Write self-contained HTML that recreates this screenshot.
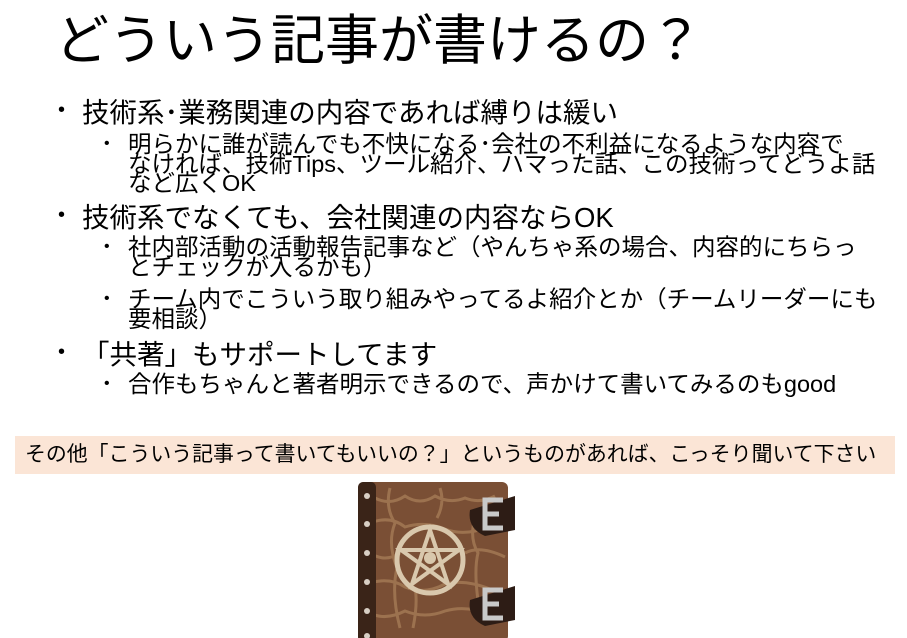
<!DOCTYPE html>
<html><head><meta charset="utf-8"><style>
body{margin:0;width:907px;height:636px;background:#fff;position:relative;overflow:hidden;font-family:"Liberation Sans","Noto Sans CJK JP",sans-serif;color:#000}
.t{position:absolute;white-space:nowrap}
.title{left:55px;top:9px;font-size:54px;line-height:64px}
.l1{font-size:27.5px;line-height:30px;left:82px}
.l2{font-size:23.5px;line-height:19.5px;left:128px}
.b1,.b2{position:absolute;font-size:20px}
.b1{left:58px}.b2{left:104px;font-size:16px}
.banner{position:absolute;left:15px;top:436px;width:880px;height:38px;background:#fbe5d6}
.banner span{position:absolute;left:10px;top:6px;font-size:20.9px;line-height:26px;white-space:nowrap}
</style></head><body>
<div class="t title">どういう記事が書けるの？</div>

<div class="b1" style="top:99px">•</div>
<div class="t l1" style="top:98px">技術系･業務関連の内容であれば縛りは緩い</div>
<div class="b2" style="top:135px">•</div>
<div class="t l2" style="top:135px">明らかに誰が読んでも不快になる･会社の不利益になるような内容で<br>なければ、技術Tips、ツール紹介、ハマった話、この技術ってどうよ話<br>など広くOK</div>

<div class="b1" style="top:204px">•</div>
<div class="t l1" style="top:203px">技術系でなくても、会社関連の内容ならOK</div>
<div class="b2" style="top:238px">•</div>
<div class="t l2" style="top:238px">社内部活動の活動報告記事など（やんちゃ系の場合、内容的にちらっ<br>とチェックが入るかも）</div>
<div class="b2" style="top:290px">•</div>
<div class="t l2" style="top:290px">チーム内でこういう取り組みやってるよ紹介とか（チームリーダーにも<br>要相談）</div>

<div class="b1" style="top:341px">•</div>
<div class="t l1" style="top:340px">「共著」もサポートしてます</div>
<div class="b2" style="top:375px">•</div>
<div class="t l2" style="top:375px">合作もちゃんと著者明示できるので、声かけて書いてみるのもgood</div>

<div class="banner"><span>その他「こういう記事って書いてもいいの？」というものがあれば、こっそり聞いて下さい</span></div>

<svg style="position:absolute;left:355px;top:478px" width="165" height="160" viewBox="0 0 165 160">
<rect x="3" y="4" width="150" height="160" rx="6" fill="#7a4f35"/>
<g stroke="#a57b56" stroke-width="3" fill="none" opacity="0.8">
<path d="M20 20 q15 8 30 -2 q15 10 30 0 q15 8 30 2 q15 6 30 -2 M15 45 q20 -8 35 4 q20 -6 40 2 q20 8 45 -3 M15 75 q15 10 30 0 M110 75 q15 -8 40 4 M15 105 q20 -6 35 4 q20 8 40 -3 q20 -5 45 5 M15 135 q15 8 35 -2 q20 8 40 0 q20 -6 45 3 M35 10 q-5 20 5 35 q-8 20 2 45 q-6 25 3 60 M85 10 q5 15 -3 30 M120 40 q-6 20 3 35 q-5 20 2 60 M60 110 q3 15 -2 40"/>
</g>
<rect x="3" y="4" width="18" height="160" rx="5" fill="#3a2418"/>
<g fill="#d8cfc4"><circle cx="12" cy="18" r="3"/><circle cx="12" cy="46" r="3"/><circle cx="12" cy="75" r="3"/><circle cx="12" cy="104" r="3"/><circle cx="12" cy="133" r="3"/><circle cx="12" cy="158" r="3"/></g>
<g fill="none" stroke="#d9c8ad" stroke-width="5">
<circle cx="75" cy="82" r="33"/>
<path d="M75 52 L93 106 L46 72 L104 72 L57 106 Z" stroke-width="4"/>
</g>
<circle cx="75" cy="80" r="6" fill="#d9c8ad"/>
<path d="M115 32 L160 18 L160 52 L130 58 Q112 50 115 32Z" fill="#2d1c15"/>
<path d="M115 122 L160 108 L160 142 L130 148 Q112 140 115 122Z" fill="#2d1c15"/>
<g fill="none" stroke="#c9c9c9" stroke-width="5"><path d="M148 22 H130 V50 H148 M130 36 H144"/><path d="M148 112 H130 V140 H148 M130 126 H144"/></g>
</svg>
</body></html>
